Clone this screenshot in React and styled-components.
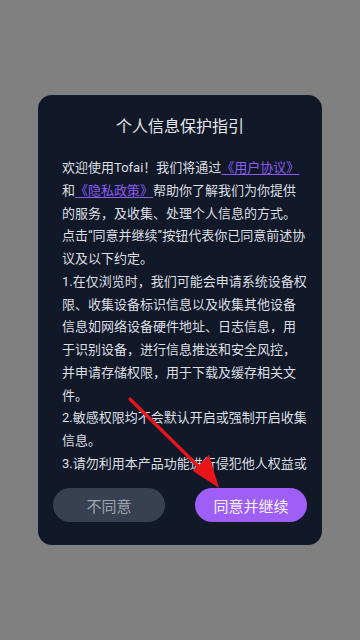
import styled, { createGlobalStyle } from "styled-components";

const Global = createGlobalStyle`
  html, body {
    margin: 0;
    padding: 0;
    background: #808080;
  }
  body {
    font-family: Roboto, "Noto Sans CJK SC", sans-serif;
  }
`;

const Screen = styled.div`
  position: relative;
  width: 360px;
  height: 640px;
  display: flex;
  justify-content: center;
  padding-top: 95px;
  box-sizing: border-box;
  background: #808080;
`;

const Dialog = styled.div`
  width: 284px;
  height: 450px;
  box-sizing: border-box;
  padding: 20px 0 23px;
  border-radius: 14px;
  background: #111827;
  display: flex;
  flex-direction: column;
`;

const Title = styled.h2`
  margin: 0 0 18px;
  font-size: 16px;
  line-height: 24px;
  font-weight: 400;
  color: #e5e7eb;
  text-align: center;
`;

const Body = styled.div`
  height: 318px;
  overflow: hidden;
  padding: 0 14px 0 24px;
  font-size: 13px;
  line-height: 22.75px;
  color: #dcdfe4;
`;

const Para = styled.p`
  margin: 0;
`;

const Link = styled.span`
  color: #8b5cf6;
  text-decoration: underline;
  text-underline-offset: 2px;
`;

const Footer = styled.div`
  margin-top: 13px;
  padding: 0 15px;
  display: flex;
  gap: 30px;
`;

const Button = styled.button`
  flex: 1;
  height: 34px;
  border: 0;
  border-radius: 17px;
  font-family: inherit;
  font-size: 15px;
  background: ${(p) => (p.$primary ? "#9f5ff7" : "#374151")};
  color: ${(p) => (p.$primary ? "#f5f3ff" : "#9ca3af")};
`;

const Arrow = styled.svg`
  position: absolute;
  left: 0;
  top: 0;
  pointer-events: none;
`;

export default function App() {
  return (
    <Screen>
      <Global />
      <Dialog>
        <Title>个人信息保护指引</Title>
        <Body>
          <Para>
            欢迎使用Tofai！我们将通过<Link>《用户协议》</Link>和<Link>《隐私政策》</Link>帮助你了解我们为你提供的服务，及收集、处理个人信息的方式。
          </Para>
          <Para>点击“同意并继续”按钮代表你已同意前述协议及以下约定。</Para>
          <Para>
            1.在仅浏览时，我们可能会申请系统设备权限、收集设备标识信息以及收集其他设备信息如网络设备硬件地址、日志信息，用于识别设备，进行信息推送和安全风控，并申请存储权限，用于下载及缓存相关文件。
          </Para>
          <Para>2.敏感权限均不会默认开启或强制开启收集信息。</Para>
          <Para>3.请勿利用本产品功能进行侵犯他人权益或违法违规的行为，否则我们有权暂停或终止服务。</Para>
        </Body>
        <Footer>
          <Button>不同意</Button>
          <Button $primary>同意并继续</Button>
        </Footer>
      </Dialog>
      <Arrow width="360" height="640" viewBox="0 0 360 640">
        <line x1="130" y1="399" x2="206" y2="474" stroke="#e8151b" strokeWidth="3.2" strokeLinecap="round" />
        <polygon points="219,488 193,471 209,455" fill="#e8151b" />
      </Arrow>
    </Screen>
  );
}
